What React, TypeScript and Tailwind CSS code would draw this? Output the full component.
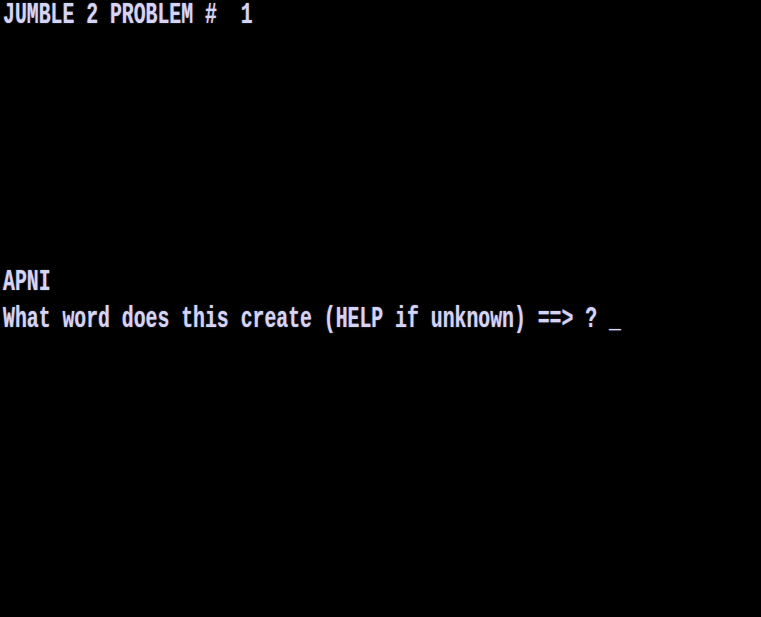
export default function App() {
  const base =
    "block whitespace-pre origin-left scale-x-[0.66] text-[30px] font-bold text-[#d6d4f4] [text-shadow:0_0_2px_rgba(200,200,255,0.5)]";
  return (
    <div
      className="w-[761px] h-[617px] bg-black overflow-hidden pl-[3px]"
      style={{ fontFamily: '"Liberation Mono", "DejaVu Sans Mono", monospace' }}
    >
      <div>
        <span className={`${base} leading-[31px] h-[31px]`}>JUMBLE 2 PROBLEM #  1</span>
      </div>
      <div className="mt-[233px]">
        <span className={`${base} leading-[37px] h-[37px]`}>APNI</span>
        <span className={`${base} leading-[37px] h-[37px]`}>
          What word does this create (HELP if unknown) ==&gt; ? _
        </span>
      </div>
    </div>
  );
}
